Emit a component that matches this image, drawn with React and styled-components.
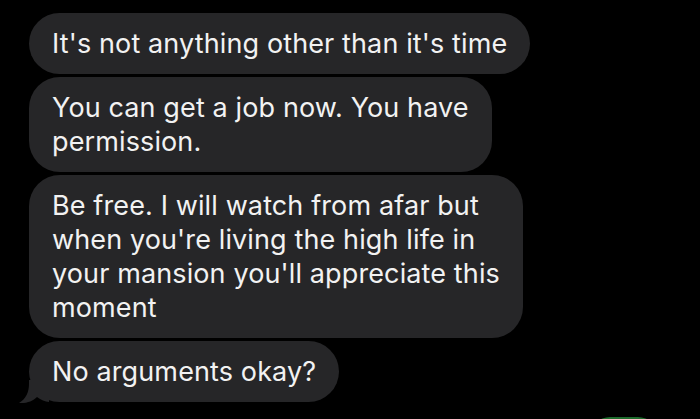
import React from "react";
import styled, { createGlobalStyle } from "styled-components";

const Global = createGlobalStyle`
  html, body { margin: 0; padding: 0; background: #000; overflow: hidden; }
  body { font-family: Inter, "Noto Sans", "Liberation Sans", sans-serif; }
`;

const Thread = styled.div`
  display: flex;
  flex-direction: column;
  align-items: flex-start;
  gap: 3px;
  padding: 13px 0 0 29px;
  height: 419px;
  box-sizing: border-box;
  position: relative;
  overflow: hidden;
`;

const Bubble = styled.div`
  position: relative;
  background: #262628;
  color: #f2f2f2;
  border-radius: 31px;
  padding: 13.5px 23px;
  font-size: 27px;
  line-height: 34px;
  letter-spacing: 0.12px;
  white-space: nowrap;
`;

const Tail = styled.svg`
  position: absolute;
  left: -10px;
  bottom: -2px;
  width: 30px;
  height: 24px;
`;

const Sent = styled.div`
  position: absolute;
  left: 590px;
  top: 417px;
  width: 68px;
  height: 40px;
  border-radius: 20px;
  background: #1d6b2c;
`;

const messages = [
  ["It's not anything other than it's time"],
  ["You can get a job now. You have", "permission."],
  [
    "Be free. I will watch from afar but",
    "when you're living the high life in",
    "your mansion you'll appreciate this",
    "moment",
  ],
  ["No arguments okay?"],
];

export default function App() {
  return (
    <>
      <Global />
      <Thread>
        {messages.map((lines, i) => (
          <Bubble key={i}>
            {lines.map((l, j) => (
              <React.Fragment key={j}>
                {j > 0 && <br />}
                {l}
              </React.Fragment>
            ))}
            {i === messages.length - 1 && (
              <Tail viewBox="0 0 30 24">
                <path
                  d="M10 0 L10 4 C10 12 7 19 0 23 C8 23.5 14 21 18 17 C22 20 26 21.5 30 22 L30 0 Z"
                  fill="#262628"
                />
              </Tail>
            )}
          </Bubble>
        ))}
        <Sent />
      </Thread>
    </>
  );
}
